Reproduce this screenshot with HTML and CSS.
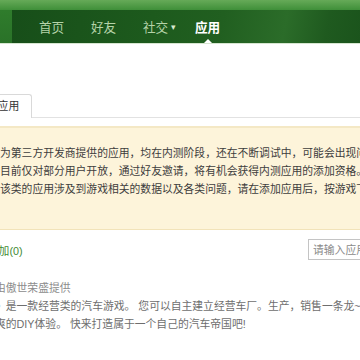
FILE: index.html
```html
<!DOCTYPE html>
<html lang="zh-CN">
<head>
<meta charset="utf-8">
<title>应用</title>
<link rel="stylesheet" href="styles.css">
</head>
<body>
<header class="topbar">
  <div class="bar">
    <nav class="nav">
      <a class="nav-item">首页</a>
      <a class="nav-item">好友</a>
      <a class="nav-item">社交<span class="caret">▾</span></a>
      <a class="nav-item active">应用</a>
    </nav>
  </div>
</header>
<main class="page">
  <div class="tabs"><span class="tab">我的应用</span></div>
  <div class="notice">
    <p>为第三方开发商提供的应用，均在内测阶段，还在不断调试中，可能会出现问题。</p>
    <p>目前仅对部分用户开放，通过好友邀请，将有机会获得内测应用的添加资格。</p>
    <p>该类的应用涉及到游戏相关的数据以及各类问题，请在添加应用后，按游戏下方的说明操作。</p>
  </div>
  <div class="toolbar">
    <span class="added">已添加(0)</span>
    <input class="search" type="text" placeholder="请输入应用名称">
  </div>
  <div class="app-info">
    <p class="provider">该应用服务由傲世荣盛提供</p>
    <p class="desc">《汽车帝国》是一款经营类的汽车游戏。 您可以自主建立经营车厂。生产，销售一条龙~<br>为您带来超爽的DIY体验。 快来打造属于一个自己的汽车帝国吧!</p>
  </div>
</main>
</body>
</html>
```
FILE: styles.css
```css
body {
  margin: 0;
  background: #fff;
  overflow: hidden;
  font-family: "Liberation Sans", "Noto Sans CJK SC", sans-serif;
}

.topbar {
  height: 43px;
  display: flex;
  flex-direction: column;
  background: linear-gradient(#66aa58 0, #3f8f39 10px, #2f7c2c 10px, #2a7228 100%);
  border-bottom: 1px solid #d6e6d0;
}

.bar {
  flex: 1;
  margin: 10px 0 0 12px;
  background: linear-gradient(100deg, #174e19 0%, #1d5a1d 40%, #215f20 60%, #2b6c29 78%, #1f5a1f 90%, #1b541c 100%);
}

.nav {
  height: 100%;
  display: grid;
  grid-template-columns: repeat(4, 52px);
  padding-left: 27px;
}

.nav-item {
  position: relative;
  display: flex;
  align-items: center;
  font-size: 12.6px;
  color: #b4d3a8;
}

.caret {
  font-size: 9px;
  margin-left: 3px;
  color: #d8ead0;
}

.nav-item.active {
  color: #fff;
  font-weight: bold;
}

.nav-item.active::after {
  content: "";
  position: absolute;
  bottom: 0;
  left: 9px;
  border-left: 4px solid transparent;
  border-right: 4px solid transparent;
  border-bottom: 4px solid #fff;
}

.page {
  margin-left: -80px;
  width: 520px;
}

.tabs {
  margin-top: 50px;
  padding-left: 43px;
  display: flex;
  border-bottom: 1px solid #e2e2e2;
}

.tab {
  height: 23px;
  line-height: 23px;
  padding: 0 12px;
  margin-bottom: -1px;
  font-size: 10.8px;
  color: #333;
  background: #fff;
  border: 1px solid #d9d9d9;
  border-bottom: none;
  border-radius: 3px 3px 0 0;
}

.notice {
  margin-top: 8px;
  padding: 16px 0 31px 80px;
  background: #fdf4da;
  border-top: 2px solid #f4e8c5;
  border-bottom: 1px solid #f2e3b9;
}

.notice p {
  margin: 0;
  line-height: 18px;
  font-size: 10.8px;
  color: #3d3d3d;
  white-space: nowrap;
}

.toolbar {
  margin-top: 9px;
  height: 21px;
  display: flex;
  align-items: center;
  padding-left: 57px;
}

.added {
  font-size: 10.8px;
  color: #3f8a33;
}

.search {
  margin-left: auto;
  width: 132px;
  height: 21px;
  box-sizing: border-box;
  padding: 0 4px;
  border: 1px solid #c4c4c4;
  font-family: inherit;
  font-size: 10.8px;
  color: #333;
}

.search::placeholder {
  color: #8a8a8a;
}

.app-info {
  margin-top: 19px;
  padding-left: 21px;
}

.app-info p {
  margin: 0;
  line-height: 18px;
  font-size: 10.8px;
  white-space: nowrap;
}

.provider {
  color: #8c8c8c;
}

.desc {
  color: #6e6e6e;
}
```
